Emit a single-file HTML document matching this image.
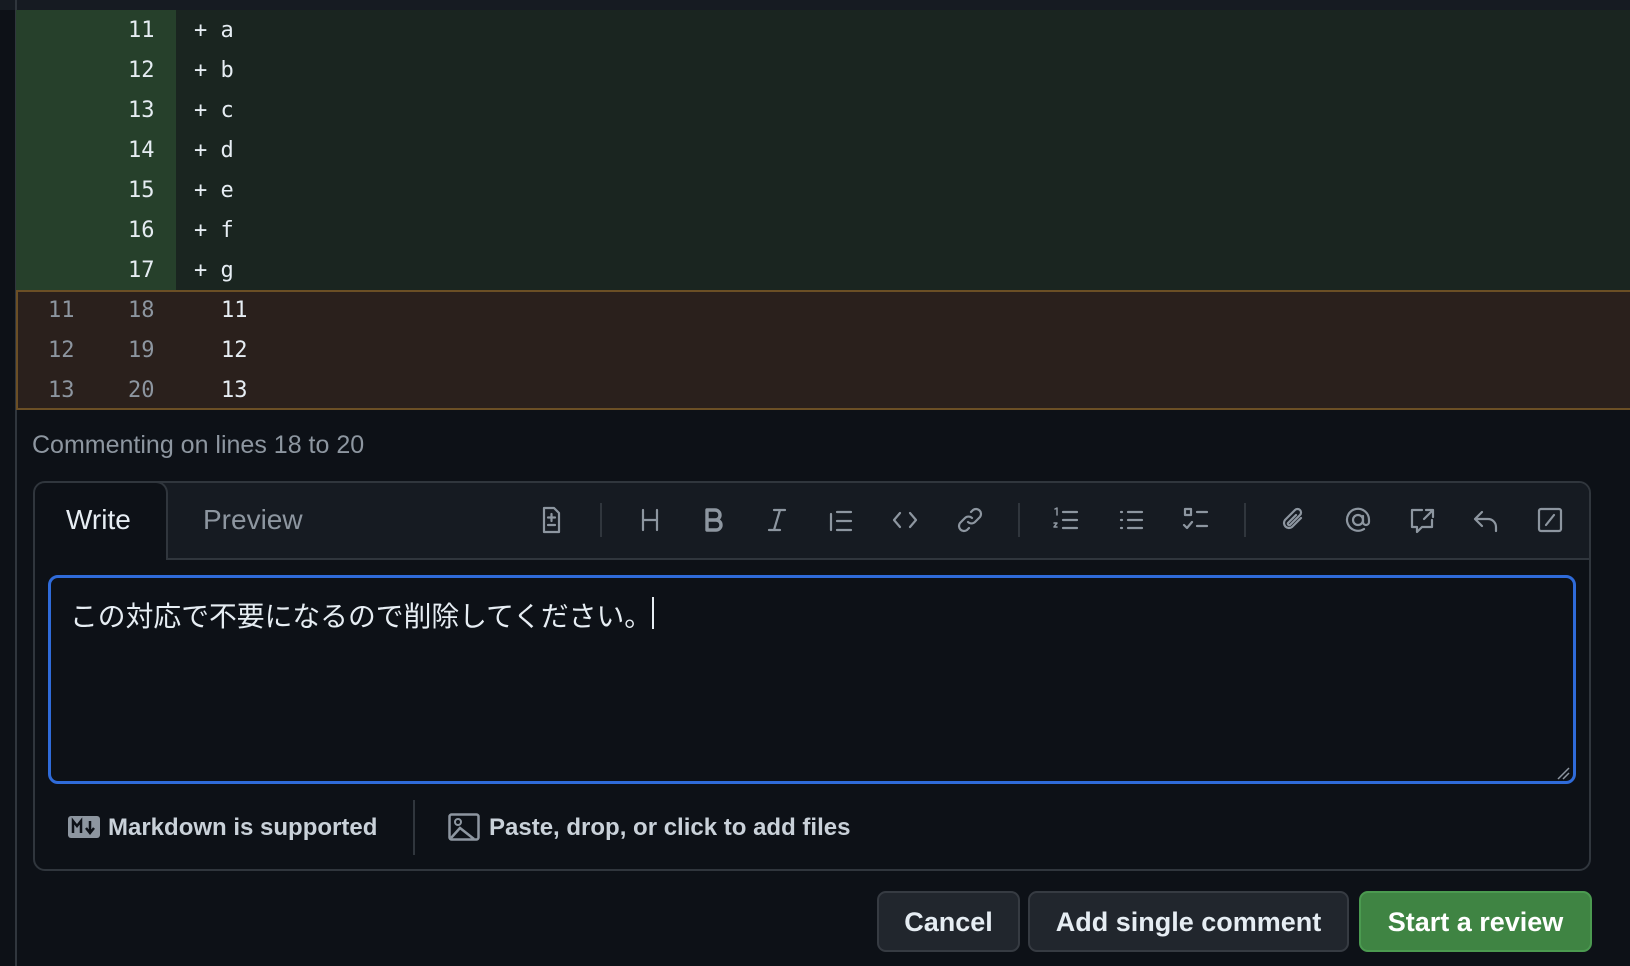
<!DOCTYPE html>
<html><head><meta charset="utf-8"><style>
*{margin:0;padding:0;box-sizing:border-box}
body{width:1630px;height:966px;background:#0d1117;position:relative;overflow:hidden;font-family:"Liberation Sans","Noto Sans CJK JP",sans-serif;color:#e6edf3}
.a{position:absolute}
.mono{font-family:"DejaVu Sans Mono","Liberation Mono",monospace;font-size:22px}
.row{position:absolute;left:16px;right:0;height:40px;line-height:40px}
.ic{position:absolute;top:504px;width:32px;height:32px}
.ic svg{width:32px;height:32px;fill:none;stroke:#8d96a0;stroke-width:2.2;stroke-linecap:round;stroke-linejoin:round}
.sep{position:absolute;top:503px;width:2px;height:34px;background:#30363d}
.btn{position:absolute;top:891px;height:61px;border-radius:9px;font-size:27px;font-weight:bold;line-height:59px;text-align:center;border:2px solid #363b42;background:#21262d;color:#e6edf3}
</style></head><body>
<div class="a" style="left:0;top:0;width:1630px;height:10px;background:#161b22"></div>
<div class="a" style="left:15px;top:0;width:2px;height:966px;background:#30363d"></div>
<div class="a" style="left:16px;top:10px;width:160px;height:280px;background:#26402b"></div>
<div class="a" style="left:176px;top:10px;right:0;height:280px;background:#1a2520"></div>
<div class="a" style="left:16px;top:290px;right:0;height:120px;background:#2a201c;border:2px solid #6b4f25;border-right:none"></div>
<div class="mono">
<div class="row" style="top:11px"><span class="a" style="left:112px">11</span><span class="a" style="left:178px">+ a</span></div>
<div class="row" style="top:51px"><span class="a" style="left:112px">12</span><span class="a" style="left:178px">+ b</span></div>
<div class="row" style="top:91px"><span class="a" style="left:112px">13</span><span class="a" style="left:178px">+ c</span></div>
<div class="row" style="top:131px"><span class="a" style="left:112px">14</span><span class="a" style="left:178px">+ d</span></div>
<div class="row" style="top:171px"><span class="a" style="left:112px">15</span><span class="a" style="left:178px">+ e</span></div>
<div class="row" style="top:211px"><span class="a" style="left:112px">16</span><span class="a" style="left:178px">+ f</span></div>
<div class="row" style="top:251px"><span class="a" style="left:112px">17</span><span class="a" style="left:178px">+ g</span></div>
<div class="row" style="top:291px"><span class="a" style="left:32px;color:#8d96a0">11</span><span class="a" style="left:112px;color:#8d96a0">18</span><span class="a" style="left:205px">11</span></div>
<div class="row" style="top:331px"><span class="a" style="left:32px;color:#8d96a0">12</span><span class="a" style="left:112px;color:#8d96a0">19</span><span class="a" style="left:205px">12</span></div>
<div class="row" style="top:371px"><span class="a" style="left:32px;color:#8d96a0">13</span><span class="a" style="left:112px;color:#8d96a0">20</span><span class="a" style="left:205px">13</span></div>
</div>
<div class="a" style="left:32px;top:431px;font-size:25px;color:#8d96a0">Commenting on lines 18 to 20</div>
<div class="a" style="left:33px;top:481px;width:1558px;height:390px;border:2px solid #30363d;border-radius:12px;background:#0d1117;overflow:hidden">
 <div class="a" style="left:0;top:0;right:0;height:77px;background:#161b22;border-bottom:2px solid #30363d"></div>
 <div class="a" style="left:-2px;top:-2px;width:135px;height:79px;background:#0d1117;border:2px solid #30363d;border-bottom:none;border-radius:12px 12px 0 0"></div>
 <div class="a" style="left:31px;top:21px;font-size:28px;color:#e6edf3">Write</div>
 <div class="a" style="left:168px;top:21px;font-size:28px;color:#8d96a0">Preview</div>
</div>
<div class="ic" style="left:535px"><svg viewBox="0 0 32 32"><path d="M9 4h10l5 5v19H9z"/><path d="M16.5 10v7M13 13.5h7M13 21h7"/></svg></div>
<div class="sep" style="left:600px"></div>
<div class="ic" style="left:634px"><svg viewBox="0 0 32 32"><path d="M9 6v20M23 6v20M9 16h14"/></svg></div>
<div class="ic" style="left:697px"><svg viewBox="0 0 32 32" style="stroke-width:3.4"><path d="M10 6h8a5 5 0 0 1 0 10h-8zM10 16h9a5 5 0 0 1 0 10h-9z"/></svg></div>
<div class="ic" style="left:761px"><svg viewBox="0 0 32 32"><path d="M13 6h11M8 26h11M19 6l-6 20"/></svg></div>
<div class="ic" style="left:825px"><svg viewBox="0 0 32 32"><path d="M6 10v16M12 8h14M12 17h14M12 26h14"/></svg></div>
<div class="ic" style="left:889px"><svg viewBox="0 0 32 32"><path d="M11 9l-6 7 6 7M21 9l6 7-6 7"/></svg></div>
<div class="ic" style="left:954px"><svg viewBox="0 0 32 32"><path d="M14 18a5 5 0 0 0 7 0l5-5a5 5 0 0 0-7-7l-2 2M18 14a5 5 0 0 0-7 0l-5 5a5 5 0 0 0 7 7l2-2"/></svg></div>
<div class="sep" style="left:1018px"></div>
<div class="ic" style="left:1050px"><svg viewBox="0 0 32 32"><path d="M13 8h14M13 16h14M13 24h14"/><path d="M5 5l2-1v7M4 19h3l-3 4h3" style="stroke-width:1.5"/></svg></div>
<div class="ic" style="left:1115px"><svg viewBox="0 0 32 32"><path d="M13 8h14M13 16h14M13 24h14M6 8h1M6 16h1M6 24h1"/></svg></div>
<div class="ic" style="left:1180px"><svg viewBox="0 0 32 32"><path d="M5 5h6v6H5zM17 8h10M17 22h10M4 21l3 3 5-6"/></svg></div>
<div class="sep" style="left:1244px"></div>
<div class="ic" style="left:1277px"><svg viewBox="0 0 32 32"><path d="M24 14l-9 9a5 5 0 0 1-7-7l10-10a3.5 3.5 0 0 1 5 5l-10 10a1.5 1.5 0 0 1-2-2l8-8"/></svg></div>
<div class="ic" style="left:1342px"><svg viewBox="0 0 32 32"><circle cx="16" cy="16" r="5"/><path d="M21 12v6a3 3 0 0 0 6 0v-2a11 11 0 1 0-5 9"/></svg></div>
<div class="ic" style="left:1406px"><svg viewBox="0 0 32 32"><path d="M16 6H6v17h5v5l5-5h10v-7M20 6h7v7M27 6l-9 9"/></svg></div>
<div class="ic" style="left:1470px"><svg viewBox="0 0 32 32"><path d="M12 8l-7 7 7 7M5 15h13a8 8 0 0 1 8 8v4"/></svg></div>
<div class="ic" style="left:1534px"><svg viewBox="0 0 32 32"><rect x="5" y="5" width="22" height="22" rx="2"/><path d="M20 11l-8 10"/></svg></div>
<div class="a" style="left:48px;top:575px;width:1528px;height:209px;border:3px solid #2f6bd9;border-radius:10px;background:#0d1117"></div>
<div class="a" style="left:70px;top:595px;font-size:27.8px;color:#e6edf3;white-space:nowrap">この対応で不要になるので削除してください。</div>
<div class="a" style="left:652px;top:597px;width:2px;height:32px;background:#e6edf3"></div>
<svg class="a" style="left:1556px;top:766px" width="14" height="14"><path d="M2 13L13 2M7 13l6-6" stroke="#8d96a0" stroke-width="1.5"/></svg>
<svg class="a" style="left:68px;top:816px" width="32" height="22" viewBox="0 0 32 22"><rect x="0" y="0" width="32" height="22" rx="3" fill="#8d96a0"/><path d="M5 17V5l4 5 4-5v12M22 5v10M18 12l4 5 4-5" stroke="#0d1117" stroke-width="2.5" fill="none"/></svg>
<div class="a" style="left:108px;top:814px;font-size:24px;font-weight:bold;color:#c9d1d9">Markdown is supported</div>
<div class="a" style="left:413px;top:800px;width:2px;height:55px;background:#30363d"></div>
<svg class="a" style="left:448px;top:813px" width="32" height="28" viewBox="0 0 32 28"><rect x="1.5" y="1.5" width="29" height="25" rx="2" fill="none" stroke="#8d96a0" stroke-width="2.5"/><circle cx="10" cy="9" r="3" fill="none" stroke="#8d96a0" stroke-width="2"/><path d="M3 25l9-10 14 11" fill="none" stroke="#8d96a0" stroke-width="2.5"/></svg>
<div class="a" style="left:489px;top:814px;font-size:24px;font-weight:bold;color:#c9d1d9">Paste, drop, or click to add files</div>
<div class="btn" style="left:877px;width:143px">Cancel</div>
<div class="btn" style="left:1028px;width:321px">Add single comment</div>
<div class="btn" style="left:1359px;width:233px;background:#3f8443;border-color:#4b9a50;color:#fff">Start a review</div>
</body></html>
